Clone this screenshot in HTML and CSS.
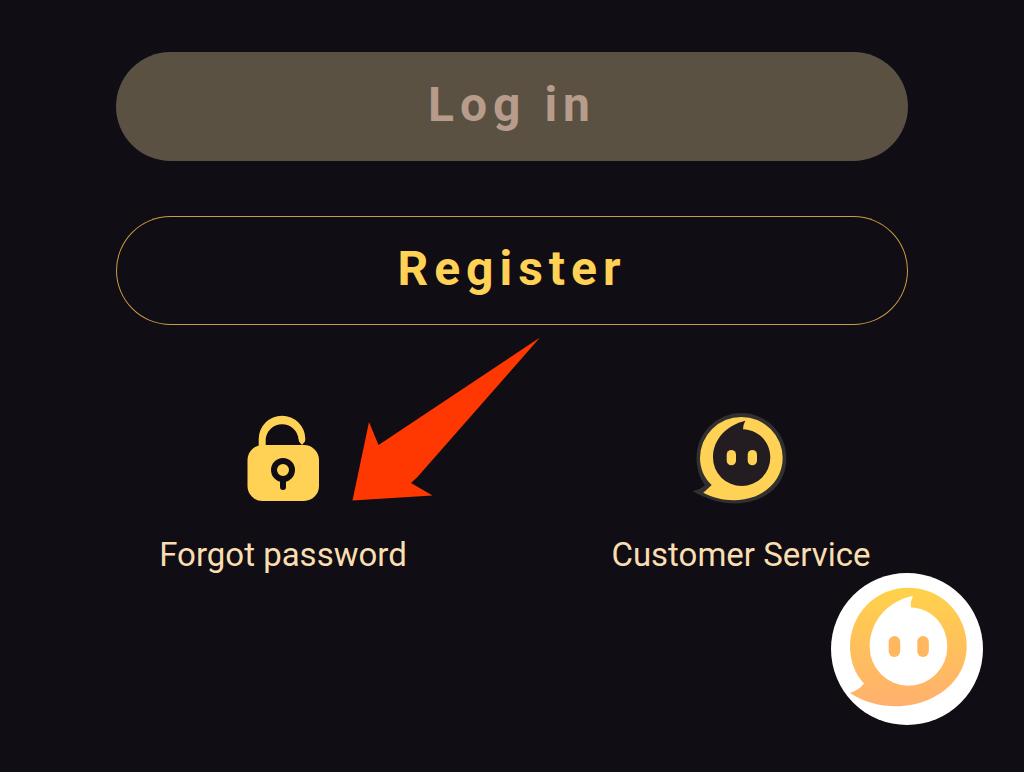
FILE: index.html
```html
<!DOCTYPE html>
<html lang="en">

<head>
    <meta charset="UTF-8">
    <meta name="viewport" content="width=device-width, initial-scale=1.0">
    <title>Log in</title>
    <link rel="stylesheet" href="styles.css">
</head>

<body>
    <main>
        <div class="buttons">
            <button type="button" class="btn btn-login" disabled>Log in</button>
            <button type="button" class="btn btn-register">Register</button>
        </div>

        <nav class="links">
            <div class="link-item">
                <a href="#forgot" class="link">
                    <svg class="link-icon" viewBox="0 0 96 96" aria-hidden="true">
                        <path d="M23.7 40V29A23.3 23.3 0 0 1 70.3 29L70 31.5L67 35L64 31.5L63.5 29A16.5 16.5 0 0 0 30.7 29V40Z" fill="#ffd154" />
                        <rect x="12.5" y="35" width="71.5" height="56" rx="15" fill="#ffd154" />
                        <circle cx="48" cy="60" r="9" fill="none" stroke="#110d14" stroke-width="6" />
                        <path d="M48 70v7" stroke="#110d14" stroke-width="6" stroke-linecap="round" />
                    </svg>
                    Forgot password
                </a>
                <!-- Arrow pointing at the lock -->
                <svg class="arrow" viewBox="0 0 188 164" aria-hidden="true">
                    <path d="M188 0.5L65 140.5L59 146L80.5 158.5L0.5 163.5L17 85L26.5 108Z" fill="#ff3700" />
                </svg>
            </div>
            <div class="link-item">
                <a href="#service" class="link">
                    <svg class="link-icon" viewBox="0 0 96 96" aria-hidden="true">
                        <path d="M12 75C7 69 3.5 59 3.5 48A44.8 44.8 0 0 1 93.3 48C93.3 68 82 83 64 89.5C44 97 22 94 -0.5 81Q7 80 12 75Z" fill="#303030" />
                        <path d="M18.7 75C11 68 7 58 7 48A41.3 41 0 0 1 89.7 48C89.7 66 78 80 62 86.5C45 92.5 26 91 10.3 82.7Z" fill="#ffd154" />
                        <path d="M50 19.3C66 20 77.3 32 77.3 47.5A28.6 28.5 0 0 1 20 47.5C20 29 34 15 52.3 10.7Q50 15 50 19.3Z" fill="#231c20" />
                        <rect x="33.7" y="40" width="9.3" height="15.3" rx="4.6" fill="#ffd154" />
                        <rect x="54.7" y="40" width="9.3" height="15.3" rx="4.6" fill="#ffd154" />
                    </svg>
                    Customer Service
                </a>
            </div>
        </nav>
    </main>

    <button type="button" class="chat-button" aria-label="Customer Service chat">
        <svg viewBox="0 0 152 152" aria-hidden="true">
            <defs>
                <linearGradient id="chatFill" gradientUnits="userSpaceOnUse" x1="0" y1="15" x2="0" y2="134">
                    <stop offset="0" stop-color="#ffd24a" />
                    <stop offset="0.5" stop-color="#ffc05c" />
                    <stop offset="1" stop-color="#ffb06e" />
                </linearGradient>
            </defs>
            <path d="M33 110.5C24 101 19 88 19 73A58.3 58.3 0 0 1 135.7 73C135.7 97 121 116 99 126C74 137 44 136 19 120Q28 117 33 110.5Z" fill="url(#chatFill)" />
            <path d="M80 34.5C101 35 116.3 52 116.3 74A38.8 38.7 0 0 1 38.7 74C38.7 49 56 28 82 23Q79 29 80 34.5Z" fill="#fff" />
            <rect x="57.7" y="63" width="11.5" height="21" rx="5.7" fill="#ffb85f" />
            <rect x="86.3" y="63" width="11.5" height="21" rx="5.7" fill="#ffb85f" />
        </svg>
    </button>
</body>

</html>
```

FILE: styles.css
```css
* {
    box-sizing: border-box;
}

body {
    font-family: Roboto, 'Liberation Sans', sans-serif;
    background-color: #110d14;
    margin: 0;
    min-height: 100vh;
}

main {
    padding: 52px 54px;
}

.buttons {
    display: flex;
    flex-direction: column;
    gap: 55px;
    padding: 0 62px;
}

.btn {
    width: 100%;
    padding: 23px 0 26px;
    border: none;
    border-radius: 55px;
    font-family: inherit;
    font-size: 48px;
    font-weight: bold;
    line-height: 60px;
    letter-spacing: 6px;
    cursor: pointer;
}

.btn-login {
    background-color: #5a5143;
    color: #b79c8b;
}

.btn-register {
    background-color: transparent;
    color: #ffd154;
    box-shadow: inset 0 0 0 1px #c89d43;
}

.links {
    display: flex;
    margin-top: 85px;
}

.link-item {
    flex: 1;
    position: relative;
    text-align: center;
}

.link {
    display: flex;
    flex-direction: column;
    align-items: center;
    gap: 29px;
    color: #f8deb0;
    font-size: 33px;
    line-height: 40px;
    text-decoration: none;
}

.link-icon {
    width: 96px;
    height: 96px;
    overflow: visible;
}

.arrow {
    position: absolute;
    top: -73px;
    left: calc(50% + 69px);
    width: 188px;
    height: 164px;
    pointer-events: none;
}

.chat-button {
    position: fixed;
    right: 41px;
    bottom: 47px;
    width: 152px;
    height: 152px;
    padding: 0;
    border: none;
    border-radius: 50%;
    background-color: #fff;
    cursor: pointer;
}

.chat-button svg {
    display: block;
    width: 100%;
    height: 100%;
}
```
